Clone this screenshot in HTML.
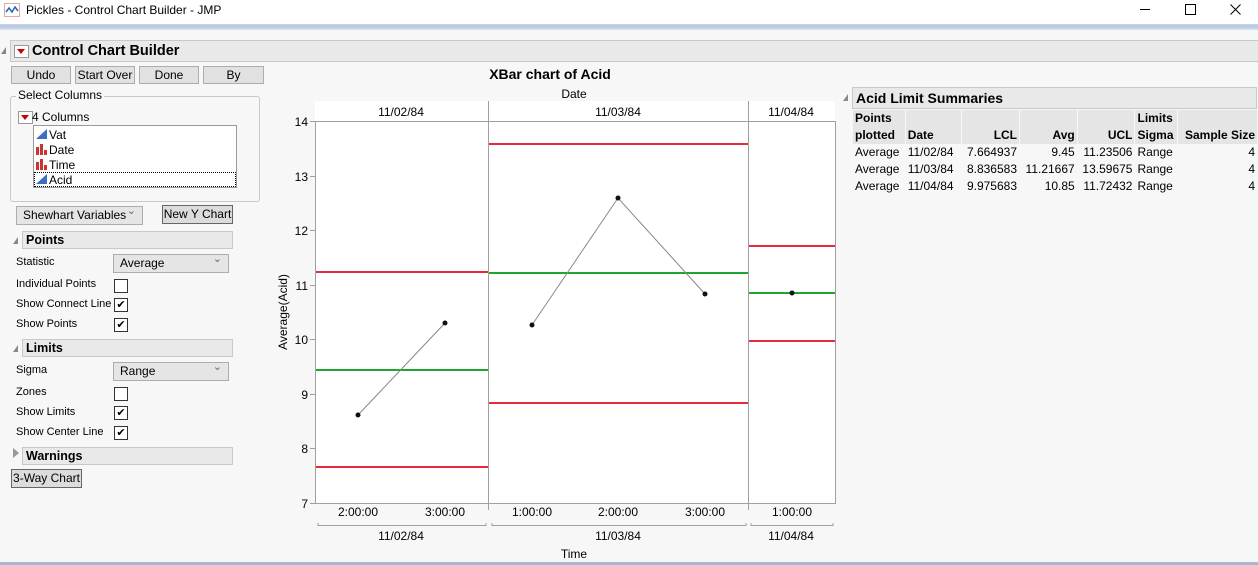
<!DOCTYPE html>
<html><head><meta charset="utf-8"><style>
body{margin:0;width:1258px;height:565px;background:#f7f7f7;font-family:"Liberation Sans",sans-serif;font-size:12px;color:#000;position:relative;overflow:hidden}
.a{position:absolute;white-space:nowrap}
.btn{position:absolute;background:#e1e1e1;border:1px solid #adadad;text-align:center;font-size:12px;line-height:16px;height:16px}
.hdr{position:absolute;background:#e9e9e9;border:1px solid #c8c8c8;font-weight:bold;font-size:12.5px;line-height:16px;padding-left:3px}
.tri{position:absolute;width:0;height:0;border-left:5px solid transparent;border-bottom:7px solid #888}
.cb{position:absolute;width:12px;height:12px;border:1px solid #333;background:#fff;font-size:11px;line-height:12px;text-align:center}
.dd{position:absolute;background:#e5e5e5;border:1px solid #adadad;height:17px;line-height:17px;padding-left:6px;font-size:12px}
.dd:after{content:"⌄";position:absolute;right:6px;top:-4px;font-size:11px;color:#666}
.red{position:absolute;width:13px;height:11px;background:#fff;border:1px solid #999}
.red:after{content:"";position:absolute;left:2px;top:3px;border-left:4.5px solid transparent;border-right:4.5px solid transparent;border-top:5px solid #c00}
</style></head><body>
<div class="a" style="left:0;top:0;width:1258px;height:24px;background:#fff"></div>
<svg class="a" style="left:4px;top:3px" width="16" height="14"><rect x="0.5" y="0.5" width="15" height="13" fill="none" stroke="#d44" stroke-dasharray="1,1"/><polyline points="2,9 5,5 8,9 11,4 14,8" fill="none" stroke="#2266bb" stroke-width="1.5"/></svg>
<div class="a" style="left:26px;top:3px;font-size:12px">Pickles - Control Chart Builder - JMP</div>
<div class="a" style="left:1140px;top:9px;width:10px;height:1px;background:#000"></div>
<div class="a" style="left:1185px;top:4px;width:9px;height:9px;border:1px solid #000"></div>
<svg class="a" style="left:1230px;top:4px" width="11" height="11"><path d="M0.5,0.5L10.5,10.5M10.5,0.5L0.5,10.5" stroke="#000" stroke-width="1"/></svg>
<div class="a" style="left:0;top:24px;width:1258px;height:6px;background:linear-gradient(#c5d4e6,#b7c8de,#dfe7f1)"></div>
<div class="a" style="left:0;top:30px;width:1258px;height:535px;background:#f7f7f7"></div>
<div class="a" style="left:0;top:562px;width:1258px;height:3px;background:#a7b7d3"></div>

<div class="tri" style="left:1px;top:47px"></div>
<div class="hdr" style="left:10px;top:40px;width:1244px;height:20px;line-height:20px;font-size:14.5px"><span style="margin-left:18px">Control Chart Builder</span></div>
<div class="red" style="left:14px;top:45px"></div>

<div class="btn" style="left:11px;top:66px;width:58px">Undo</div>
<div class="btn" style="left:75px;top:66px;width:58px">Start Over</div>
<div class="btn" style="left:139px;top:66px;width:58px">Done</div>
<div class="btn" style="left:203px;top:66px;width:59px">By</div>

<div class="a" style="left:10px;top:96px;width:248px;height:104px;border:1px solid #c8c8c8;border-radius:3px"></div>
<div class="a" style="left:16px;top:88px;background:#f7f7f7;padding:0 2px">Select Columns</div>
<div class="red" style="left:18px;top:111px"></div>
<div class="a" style="left:32px;top:110px">4 Columns</div>
<div class="a" style="left:33px;top:125px;width:202px;height:61px;background:#fff;border:1px solid #999"></div>
<svg class="a" style="left:35px;top:128px" width="14" height="60">
<polygon points="1,11 12,1 12,11" fill="#3a6fc4"/>
<rect x="1" y="19" width="3" height="8" fill="#c33"/><rect x="5" y="16" width="3" height="11" fill="#c33"/><rect x="9" y="22" width="3" height="5" fill="#c33"/>
<rect x="1" y="34" width="3" height="8" fill="#c33"/><rect x="5" y="31" width="3" height="11" fill="#c33"/><rect x="9" y="37" width="3" height="5" fill="#c33"/>
<polygon points="1,56 12,46 12,56" fill="#3a6fc4"/></svg>
<div class="a" style="left:49px;top:128px">Vat</div>
<div class="a" style="left:49px;top:143px">Date</div>
<div class="a" style="left:49px;top:158px">Time</div>
<div class="a" style="left:34px;top:172px;width:200px;height:13px;border:1px dotted #000"></div>
<div class="a" style="left:49px;top:173px">Acid</div>

<div class="dd" style="left:16px;top:206px;width:119px">Shewhart Variables</div>
<div class="btn" style="left:162px;top:205px;width:69px;height:17px;background:#dcdcdc;border-color:#666">New Y Chart</div>

<div class="tri" style="left:13px;top:237px"></div>
<div class="hdr" style="left:22px;top:231px;width:206px">Points</div>
<div class="a" style="left:16px;top:256px;font-size:11px">Statistic</div>
<div class="dd" style="left:113px;top:254px;width:108px">Average</div>
<div class="a" style="left:16px;top:278px;font-size:11px">Individual Points</div>
<div class="cb" style="left:114px;top:279px"></div>
<div class="a" style="left:16px;top:298px;font-size:11px">Show Connect Line</div>
<div class="cb" style="left:114px;top:298px">✔</div>
<div class="a" style="left:16px;top:318px;font-size:11px">Show Points</div>
<div class="cb" style="left:114px;top:318px">✔</div>

<div class="tri" style="left:13px;top:345px"></div>
<div class="hdr" style="left:22px;top:339px;width:206px">Limits</div>
<div class="a" style="left:16px;top:364px;font-size:11px">Sigma</div>
<div class="dd" style="left:113px;top:362px;width:108px">Range</div>
<div class="a" style="left:16px;top:386px;font-size:11px">Zones</div>
<div class="cb" style="left:114px;top:387px"></div>
<div class="a" style="left:16px;top:406px;font-size:11px">Show Limits</div>
<div class="cb" style="left:114px;top:406px">✔</div>
<div class="a" style="left:16px;top:426px;font-size:11px">Show Center Line</div>
<div class="cb" style="left:114px;top:426px">✔</div>

<div class="a" style="left:13px;top:448px;width:0;height:0;border-top:5px solid transparent;border-bottom:5px solid transparent;border-left:6px solid #999"></div>
<div class="hdr" style="left:22px;top:447px;width:206px">Warnings</div>
<div class="btn" style="left:11px;top:469px;width:69px;height:17px;background:#dcdcdc;border-color:#666">3-Way Chart</div>

<svg class="a" style="left:270px;top:60px" width="580" height="505" font-family="Liberation Sans, sans-serif" font-size="12">
<text x="280" y="19" font-weight="bold" font-size="14" text-anchor="middle">XBar chart of Acid</text>
<text x="304" y="38" text-anchor="middle">Date</text>
<rect x="45" y="41" width="520" height="20" fill="#fff"/>
<rect x="45" y="61" width="520" height="382" fill="#fff"/>
<g stroke="#a0a0a0" stroke-width="1" fill="none">
<line x1="45.5" y1="61.5" x2="565.5" y2="61.5"/>
<line x1="45.5" y1="61" x2="45.5" y2="443"/>
<line x1="565.5" y1="61" x2="565.5" y2="443"/>
<line x1="45" y1="443.5" x2="566" y2="443.5"/>
<line x1="218.5" y1="41" x2="218.5" y2="450"/>
<line x1="478.5" y1="41" x2="478.5" y2="450"/>
<line x1="40" y1="61.5" x2="45" y2="61.5"/><line x1="40" y1="116.5" x2="45" y2="116.5"/><line x1="40" y1="170.5" x2="45" y2="170.5"/><line x1="40" y1="225.5" x2="45" y2="225.5"/><line x1="40" y1="279.5" x2="45" y2="279.5"/><line x1="40" y1="334.5" x2="45" y2="334.5"/><line x1="40" y1="388.5" x2="45" y2="388.5"/><line x1="40" y1="443.5" x2="45" y2="443.5"/>
<polyline points="48,463 48,465.5 216,465.5 216,463"/>
<polyline points="222,463 222,465.5 476,465.5 476,463"/>
<polyline points="481,463 481,465.5 563,465.5 563,463"/>
</g>
<g text-anchor="end"><text x="38" y="66">14</text><text x="38" y="121">13</text><text x="38" y="175">12</text><text x="38" y="230">11</text><text x="38" y="284">10</text><text x="38" y="339">9</text><text x="38" y="393">8</text><text x="38" y="448">7</text></g>
<text transform="translate(17,252) rotate(-90)" text-anchor="middle">Average(Acid)</text>
<g text-anchor="middle"><text x="131" y="56">11/02/84</text><text x="348" y="56">11/03/84</text><text x="521" y="56">11/04/84</text>
<text x="88" y="456">2:00:00</text><text x="175" y="456">3:00:00</text><text x="262" y="456">1:00:00</text><text x="348" y="456">2:00:00</text><text x="435" y="456">3:00:00</text><text x="522" y="456">1:00:00</text>
<text x="131" y="480">11/02/84</text><text x="348" y="480">11/03/84</text><text x="521" y="480">11/04/84</text>
<text x="304" y="498">Time</text></g>
<g stroke-width="2">
<line x1="46" y1="212" x2="218" y2="212" stroke="#e8293b"/><line x1="46" y1="310" x2="218" y2="310" stroke="#1fa52b"/><line x1="46" y1="407" x2="218" y2="407" stroke="#e8293b"/>
<line x1="219" y1="84" x2="478" y2="84" stroke="#e8293b"/><line x1="219" y1="213" x2="478" y2="213" stroke="#1fa52b"/><line x1="219" y1="343" x2="478" y2="343" stroke="#e8293b"/>
<line x1="479" y1="186" x2="565" y2="186" stroke="#e8293b"/><line x1="479" y1="233" x2="565" y2="233" stroke="#1fa52b"/><line x1="479" y1="281" x2="565" y2="281" stroke="#e8293b"/>
</g>
<g stroke="#888" fill="none"><polyline points="88,355 175,263"/><polyline points="262,265 348,138 435,234"/></g>
<g fill="#111"><circle cx="88" cy="355" r="2.5"/><circle cx="175" cy="263" r="2.5"/><circle cx="262" cy="265" r="2.5"/><circle cx="348" cy="138" r="2.5"/><circle cx="435" cy="234" r="2.5"/><circle cx="522" cy="233" r="2.5"/></g>
</svg>

<div class="tri" style="left:843px;top:94px"></div>
<div class="hdr" style="left:852px;top:87px;width:400px;height:20px;line-height:20px;font-size:14px">Acid Limit Summaries</div>
<table class="a" style="left:852px;top:110px;border-collapse:separate;border-spacing:1px 0;font-size:12px;line-height:17px">
<tr style="font-weight:bold;background:#e5e5e5;vertical-align:bottom">
<td style="width:48px;padding:0 2px">Points<br>plotted</td><td style="width:52px;padding:0 2px">Date</td><td style="width:53px;padding:0 2px;text-align:right">LCL</td><td style="width:53px;padding:0 2px;text-align:right">Avg</td><td style="width:53px;padding:0 2px;text-align:right">UCL</td><td style="width:38px;padding:0 2px">Limits<br>Sigma</td><td style="width:75px;padding:0 2px;text-align:right">Sample Size</td></tr>
<tr><td style="padding:0 2px">Average</td><td style="padding:0 2px">11/02/84</td><td style="padding:0 2px;text-align:right">7.664937</td><td style="padding:0 2px;text-align:right">9.45</td><td style="padding:0 2px;text-align:right">11.23506</td><td style="padding:0 2px">Range</td><td style="padding:0 2px;text-align:right">4</td></tr>
<tr><td style="padding:0 2px">Average</td><td style="padding:0 2px">11/03/84</td><td style="padding:0 2px;text-align:right">8.836583</td><td style="padding:0 2px;text-align:right">11.21667</td><td style="padding:0 2px;text-align:right">13.59675</td><td style="padding:0 2px">Range</td><td style="padding:0 2px;text-align:right">4</td></tr>
<tr><td style="padding:0 2px">Average</td><td style="padding:0 2px">11/04/84</td><td style="padding:0 2px;text-align:right">9.975683</td><td style="padding:0 2px;text-align:right">10.85</td><td style="padding:0 2px;text-align:right">11.72432</td><td style="padding:0 2px">Range</td><td style="padding:0 2px;text-align:right">4</td></tr>
</table>
</body></html>
